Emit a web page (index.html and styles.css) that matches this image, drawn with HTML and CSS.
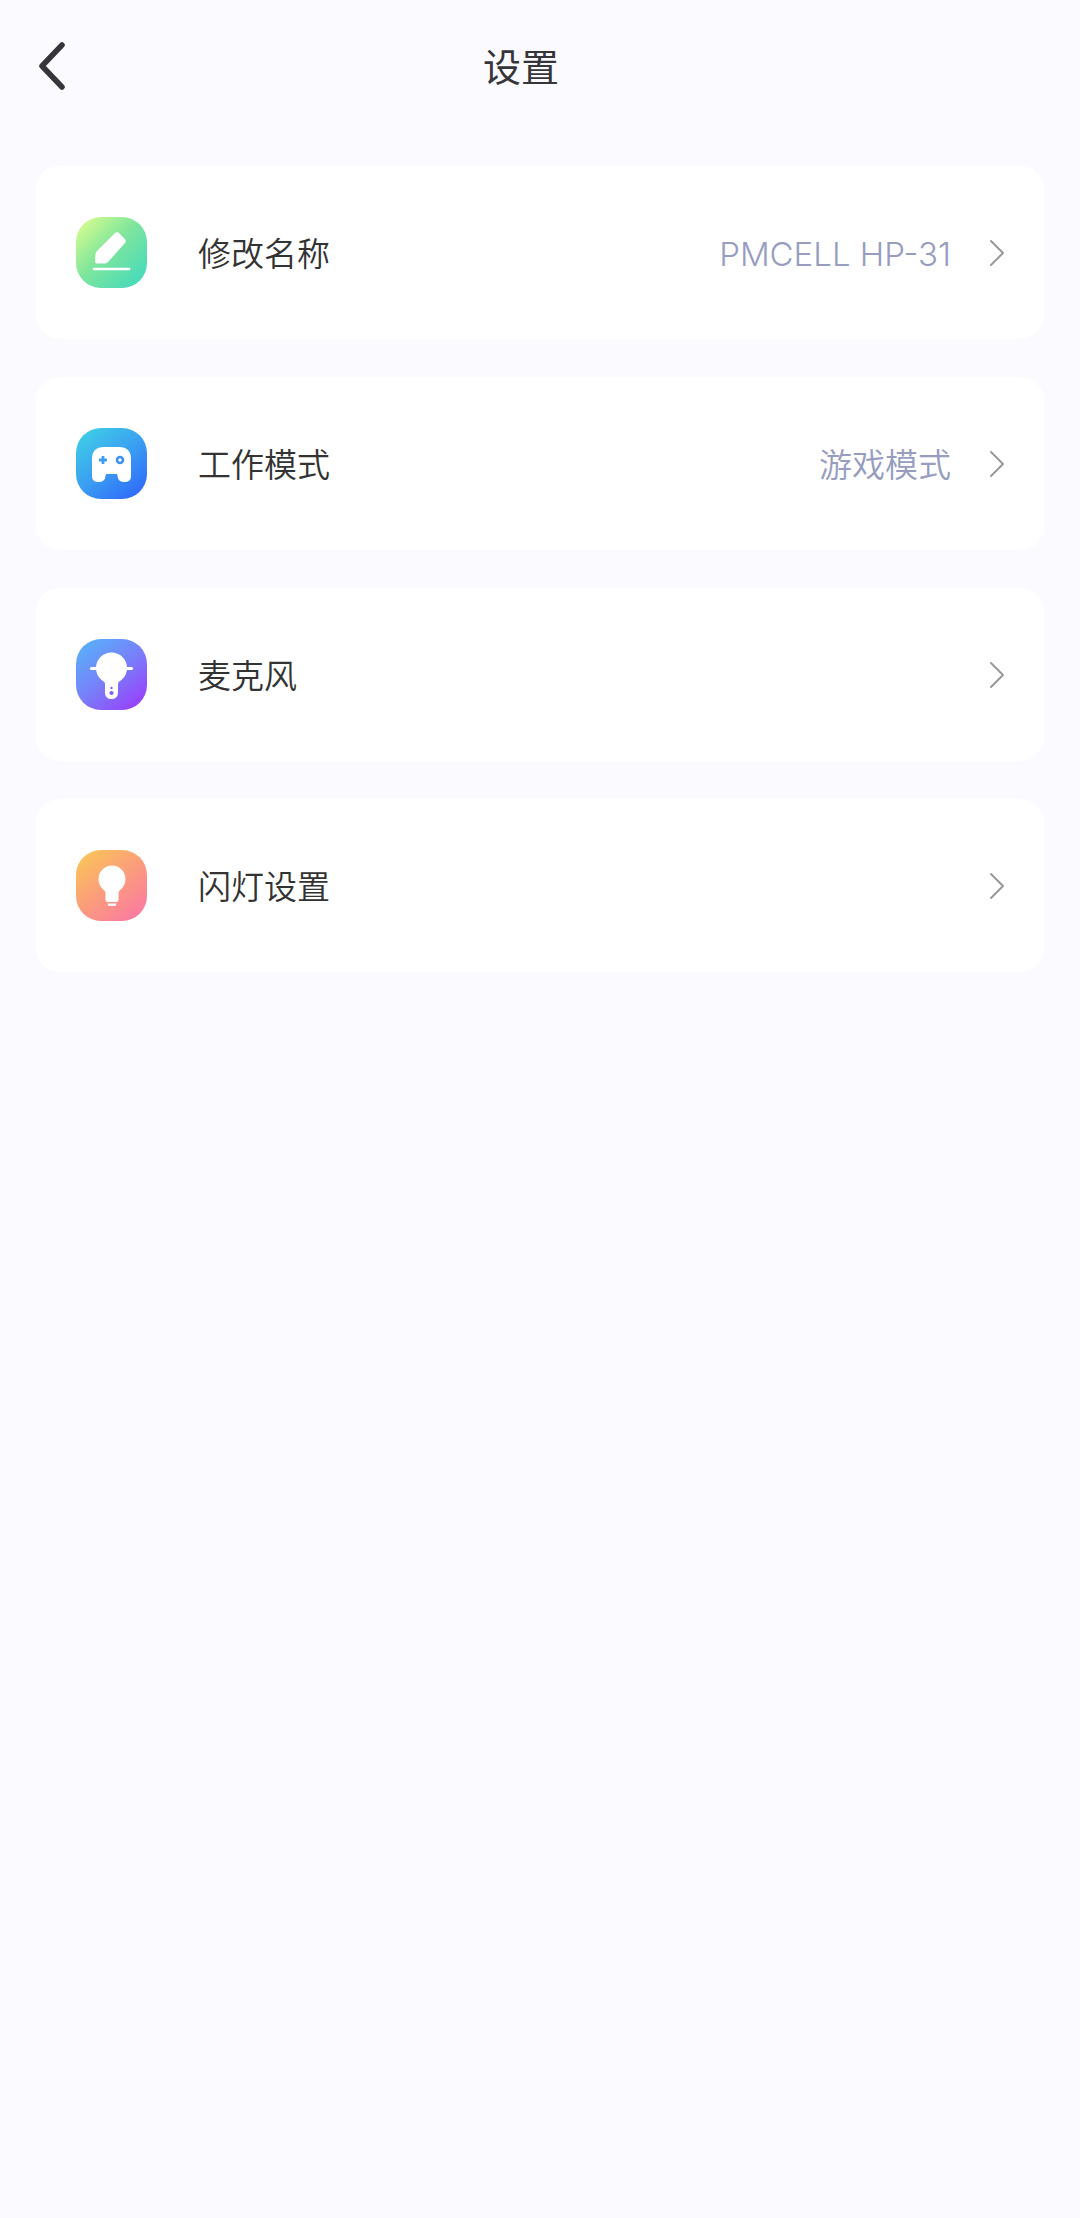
FILE: index.html
```html
<!DOCTYPE html>
<html lang="zh-CN">
<head>
<meta charset="utf-8">
<meta name="viewport" content="width=device-width, initial-scale=1">
<title>设置</title>
<link rel="stylesheet" href="styles.css">
</head>
<body>
<header class="topbar">
  <button class="back" type="button" aria-label="返回">
    <svg width="28" height="48" viewBox="0 0 28 48" aria-hidden="true"><path d="M24 3 4 24l20 21" fill="none" stroke="currentColor" stroke-width="5.500" stroke-linecap="round" stroke-linejoin="round"/></svg>
  </button>
  <h1 class="title">设置</h1>
</header>
<main class="list">
  <a class="row" href="#name">
    <svg class="icon" viewBox="0 0 71 71" aria-hidden="true">
      <defs><linearGradient id="g1" x1="0" y1="0" x2="1" y2="1"><stop offset="0.1" stop-color="#cdfa90"/><stop offset="0.45" stop-color="#81e69c"/><stop offset="0.95" stop-color="#42d9bd"/></linearGradient></defs>
      <rect width="71" height="71" rx="25" fill="url(#g1)"/>
      <path d="M38.500 16.500Q41 14 43.500 16.500L48.500 21.500Q51 24 48.500 26.500L33 44Q31 46.500 28.500 46.500L21 46.500Q19 46.500 19 44.500L19.500 37Q19.700 35.500 21 34Z" fill="#fff"/>
      <path d="M18 52H53" stroke="#fff" stroke-width="2.600" stroke-linecap="round"/>
    </svg>
    <span class="label">修改名称</span>
    <span class="value">PMCELL HP-31</span>
    <svg class="chevron" viewBox="0 0 16 28" aria-hidden="true"><path d="M2 2 14 14 2 26"/></svg>
  </a>
  <a class="row" href="#mode">
    <svg class="icon" viewBox="0 0 71 71" aria-hidden="true">
      <defs><linearGradient id="g2" x1="0.1" y1="0" x2="0.9" y2="1"><stop offset="0" stop-color="#3fd0e6"/><stop offset="0.5" stop-color="#3a9ff2"/><stop offset="1" stop-color="#2f66fb"/></linearGradient></defs>
      <rect width="71" height="71" rx="25" fill="url(#g2)"/>
      <path d="M28 19H43Q55 19 55 31V48Q55 54 48.500 54Q42 54 41.500 48L41 46H30L29.500 48Q29 54 22.500 54Q16 54 16 48V31Q16 19 28 19Z" fill="#fff"/>
      <path d="M27 28V36M23 32H31" stroke="#3c9df0" stroke-width="2.800"/>
      <circle cx="44" cy="32" r="3" fill="none" stroke="#3c93f0" stroke-width="2.600"/>
    </svg>
    <span class="label">工作模式</span>
    <span class="value">游戏模式</span>
    <svg class="chevron" viewBox="0 0 16 28" aria-hidden="true"><path d="M2 2 14 14 2 26"/></svg>
  </a>
  <a class="row" href="#mic">
    <svg class="icon" viewBox="0 0 71 71" aria-hidden="true">
      <defs><linearGradient id="g3" x1="0.1" y1="0" x2="0.9" y2="1"><stop offset="0" stop-color="#56b2fa"/><stop offset="0.5" stop-color="#7880fa"/><stop offset="1" stop-color="#9b3bfb"/></linearGradient></defs>
      <rect width="71" height="71" rx="25" fill="url(#g3)"/>
      <path d="M15.500 29.500H55.500" stroke="#fff" stroke-width="3.200" stroke-linecap="round"/>
      <circle cx="35.500" cy="29" r="15.500" fill="#fff"/>
      <path d="M26 40Q29 42 29 46V54Q29.500 60 35.500 60Q41.500 60 42 54V46Q42 42 45 40Z" fill="#fff"/>
      <circle cx="35.500" cy="49" r="1.200" fill="#8a5cf5"/><circle cx="35.500" cy="54" r="2.100" fill="#8a5cf5"/>
    </svg>
    <span class="label">麦克风</span>
    <svg class="chevron" viewBox="0 0 16 28" aria-hidden="true"><path d="M2 2 14 14 2 26"/></svg>
  </a>
  <a class="row" href="#light">
    <svg class="icon" viewBox="0 0 71 71" aria-hidden="true">
      <defs><linearGradient id="g4" x1="0.1" y1="0" x2="0.9" y2="1"><stop offset="0" stop-color="#fbc657"/><stop offset="0.5" stop-color="#fb9c7c"/><stop offset="1" stop-color="#fa78a4"/></linearGradient></defs>
      <rect width="71" height="71" rx="25" fill="url(#g4)"/>
      <path d="M36 15.500A13.500 13.500 0 0 1 49.500 29Q49.500 36 44 40Q42.500 41.500 42.500 43.500V50Q42.500 52 40.500 52H31.500Q29.500 52 29.500 50V43.500Q29.500 41.500 28 40Q22.500 36 22.500 29A13.500 13.500 0 0 1 36 15.500Z" fill="#fff"/>
      <path d="M31.500 53.500H40.500L39.500 56H32.500Z" fill="#fff"/>
    </svg>
    <span class="label">闪灯设置</span>
    <svg class="chevron" viewBox="0 0 16 28" aria-hidden="true"><path d="M2 2 14 14 2 26"/></svg>
  </a>
</main>
</body>
</html>
```
FILE: styles.css
```css
* {
  box-sizing: border-box;
}

body {
  margin: 0;
  min-height: 100vh;
  background: #fbfaff;
  color: #333;
  font-family: Inter, "Noto Sans CJK SC", sans-serif;
}

.topbar {
  display: grid;
  grid-template-columns: 1fr auto 1fr;
  align-items: center;
  height: 132px;
  padding-right: 38px;
}

.back {
  justify-self: start;
  display: flex;
  padding: 0 38px;
  border: 0;
  background: none;
  color: #35353a;
  cursor: pointer;
}

.title {
  margin: 0;
  padding-top: 2px;
  color: #35353a;
  font-size: 38px;
  line-height: 56px;
  font-weight: 400;
}

.list {
  display: flex;
  flex-direction: column;
  gap: 38px;
  padding: 34px 36px;
}

.row {
  display: flex;
  align-items: center;
  min-height: 173px;
  padding: 0 39px 0 40px;
  border-radius: 24px;
  background: #fff;
  color: #333;
  font-size: 33px;
  line-height: 48px;
  font-weight: 350;
  text-decoration: none;
}

.icon {
  width: 71px;
  height: 71px;
  margin-right: 51px;
}

.label,
.value {
  padding-top: 2px;
}

.label {
  flex: 1;
}

.value {
  color: #969dbf;
  font-weight: 300;
}

.value:lang(zh) {
  font-weight: 350;
}

.chevron {
  width: 16px;
  height: 28px;
  margin-left: 38px;
  fill: none;
  stroke: #999;
  stroke-width: 2;
  stroke-linecap: round;
  stroke-linejoin: round;
}
```
